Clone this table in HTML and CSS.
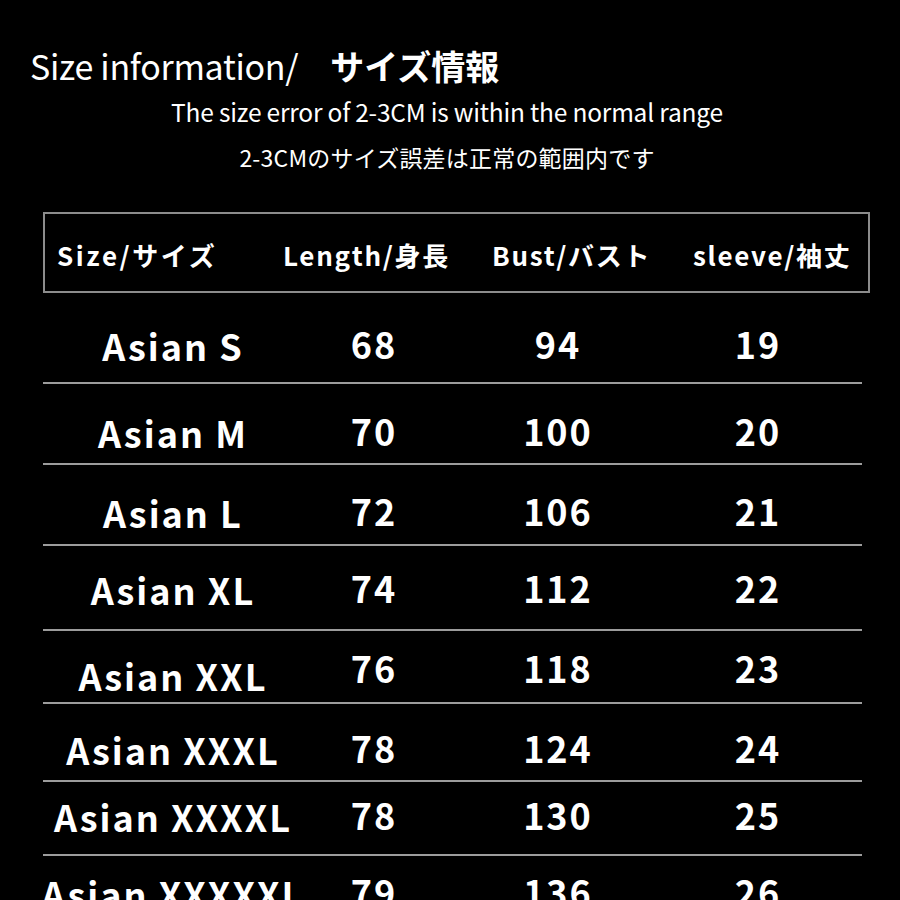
FILE: index.html
```html
<!DOCTYPE html>
<html lang="ja">
<head>
<meta charset="utf-8">
<title>Size information</title>
<link rel="stylesheet" href="styles.css">
</head>
<body>
<div class="page">
  <h1 class="title">Size information/<span class="title-jp">サイズ情報</span></h1>
  <p class="note note-en">The size error of 2-3CM is within the normal range</p>
  <p class="note note-jp">2-3CMのサイズ誤差は正常の範囲内です</p>

  <div class="table">
    <div class="head">
      <span>Size/サイズ</span>
      <span>Length/身長</span>
      <span>Bust/バスト</span>
      <span>sleeve/袖丈</span>
    </div>
    <div class="row"><span class="size">Asian S</span><span>68</span><span>94</span><span>19</span></div>
    <div class="row"><span class="size">Asian M</span><span>70</span><span>100</span><span>20</span></div>
    <div class="row"><span class="size">Asian L</span><span>72</span><span>106</span><span>21</span></div>
    <div class="row"><span class="size">Asian XL</span><span>74</span><span>112</span><span>22</span></div>
    <div class="row"><span class="size">Asian XXL</span><span>76</span><span>118</span><span>23</span></div>
    <div class="row"><span class="size">Asian XXXL</span><span>78</span><span>124</span><span>24</span></div>
    <div class="row"><span class="size">Asian XXXXL</span><span>78</span><span>130</span><span>25</span></div>
    <div class="row"><span class="size">Asian XXXXXL</span><span>79</span><span>136</span><span>26</span></div>
  </div>
</div>
</body>
</html>
```

FILE: styles.css
```css
html, body {
  margin: 0;
  padding: 0;
  background: #000;
}
body {
  color: #fff;
  font-family: "Noto Sans CJK JP", "Noto Sans", sans-serif;
  width: 900px;
  height: 900px;
  overflow: hidden;
}
.page {
  padding-top: 40px;
}
.title {
  margin: 0 0 0 30px;
  font-size: 34px;
  font-weight: 400;
  line-height: 52px;
  letter-spacing: -0.3px;
  white-space: nowrap;
}
.title-jp {
  font-weight: 700;
  margin-left: 32px;
  letter-spacing: 0;
}
.note {
  margin: 0;
  text-align: center;
  padding-right: 6px;
  white-space: nowrap;
}
.note-en {
  font-size: 24.5px;
  line-height: 32px;
  margin-top: 4px;
  letter-spacing: -0.2px;
}
.note-jp {
  font-size: 23px;
  line-height: 30px;
  margin-top: 14px;
  letter-spacing: 0.2px;
}
.table {
  margin: 40px 0 0 43px;
  width: 827px;
}
.head {
  display: grid;
  grid-template-columns: 226px 209px 201px 1fr;
  align-items: center;
  height: 73px;
  border: 2px solid #8c8c8c;
  padding-left: 12px;
  font-size: 26px;
  font-weight: 700;
  letter-spacing: 1.7px;
  padding-top: 4px;
  white-space: nowrap;
}
.head span:first-child {
  letter-spacing: 2.6px;
}
.row {
  display: grid;
  grid-template-columns: 260px 142px 226px 174px;
  width: 819px;
  align-items: end;
  justify-items: center;
  border-bottom: 2px solid #9c9c9c;
  font-size: 36px;
  font-weight: 700;
  line-height: 40px;
  letter-spacing: 2px;
  box-sizing: border-box;
  white-space: nowrap;
}
.row:nth-child(2) { height: 91px; padding-bottom: 19px; }
.row:nth-child(3) { height: 81px; padding-bottom: 13px; }
.row:nth-child(4) { height: 81px; padding-bottom: 14px; }
.row:nth-child(5) { height: 85px; padding-bottom: 22px; }
.row:nth-child(6) { height: 73px; padding-bottom: 15px; }
.row:nth-child(7) { height: 78px; padding-bottom: 13px; }
.row:nth-child(8) { height: 74px; padding-bottom: 20px; }
.row:nth-child(9) { height: 70px; padding-bottom: 0; border-bottom: none; align-items: start; padding-top: 15px; }
.size {
  position: relative;
  top: 2px;
}
.row:nth-child(6) .size { top: 8px; }
```
